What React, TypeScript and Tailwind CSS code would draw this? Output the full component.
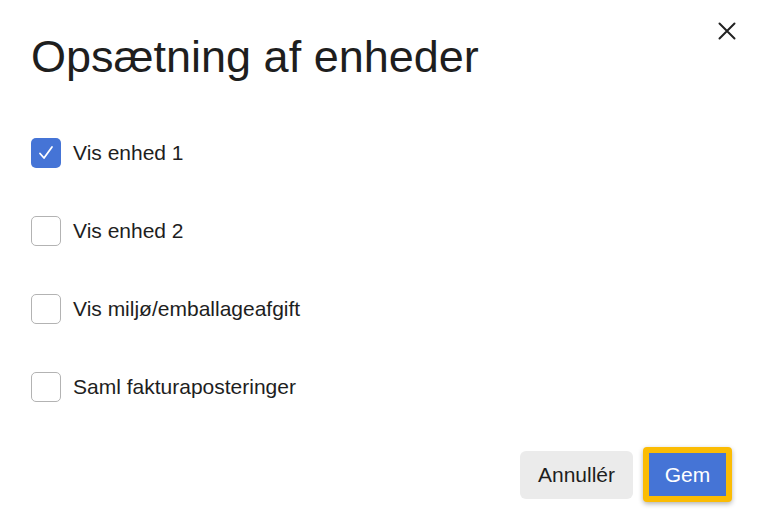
import React from "react";

const items = [
  { label: "Vis enhed 1", checked: true },
  { label: "Vis enhed 2", checked: false },
  { label: "Vis miljø/emballageafgift", checked: false },
  { label: "Saml fakturaposteringer", checked: false },
];

function Box({ checked }: { checked: boolean }) {
  if (checked) {
    return (
      <span className="w-[30px] h-[30px] rounded-[5px] bg-[#4574d6] flex items-center justify-center shrink-0">
        <svg width="18" height="18" viewBox="0 0 18 18" fill="none">
          <path d="M3 9.5 L7 14 L15 3" stroke="white" strokeWidth="1.8" strokeLinecap="round" strokeLinejoin="round" />
        </svg>
      </span>
    );
  }
  return <span className="w-[30px] h-[30px] rounded-[5px] border border-[#b3b3b3] bg-white shrink-0" />;
}

export default function App() {
  return (
    <div className="w-[757px] h-[526px] bg-white relative font-['Liberation_Sans',Arial,sans-serif] text-[#1e1e1e] overflow-hidden">
      <button className="absolute top-[22px] left-[718px] w-[18px] h-[18px] flex items-center justify-center">
        <svg width="18" height="18" viewBox="0 0 18 18" fill="none">
          <path d="M1.5 1.5 L16.5 16.5 M16.5 1.5 L1.5 16.5" stroke="#222" strokeWidth="2" strokeLinecap="round" />
        </svg>
      </button>
      <div className="pt-[31px] pl-[31px]">
        <h1 className="text-[45px] leading-[52px] font-normal">Opsætning af enheder</h1>
        <div className="mt-[55px] flex flex-col gap-[48px]">
          {items.map((it) => (
            <div key={it.label} className="flex items-center gap-[12px] h-[30px]">
              <Box checked={it.checked} />
              <span className="text-[21px] leading-[30px]">{it.label}</span>
            </div>
          ))}
        </div>
      </div>
      <div className="mt-[45px] flex justify-end items-center gap-[10px] pr-[25px]">
        <button className="w-[113px] h-[48px] rounded-[6px] bg-[#ebebeb] text-[21px] text-[#1e1e1e]">Annullér</button>
        <button className="w-[89px] h-[55px] rounded-[4px] border-[6px] border-[#fbbc04] bg-[#4574d6] text-[21px] text-white shadow-[0_2px_5px_rgba(0,0,0,0.3)]">Gem</button>
      </div>
    </div>
  );
}
